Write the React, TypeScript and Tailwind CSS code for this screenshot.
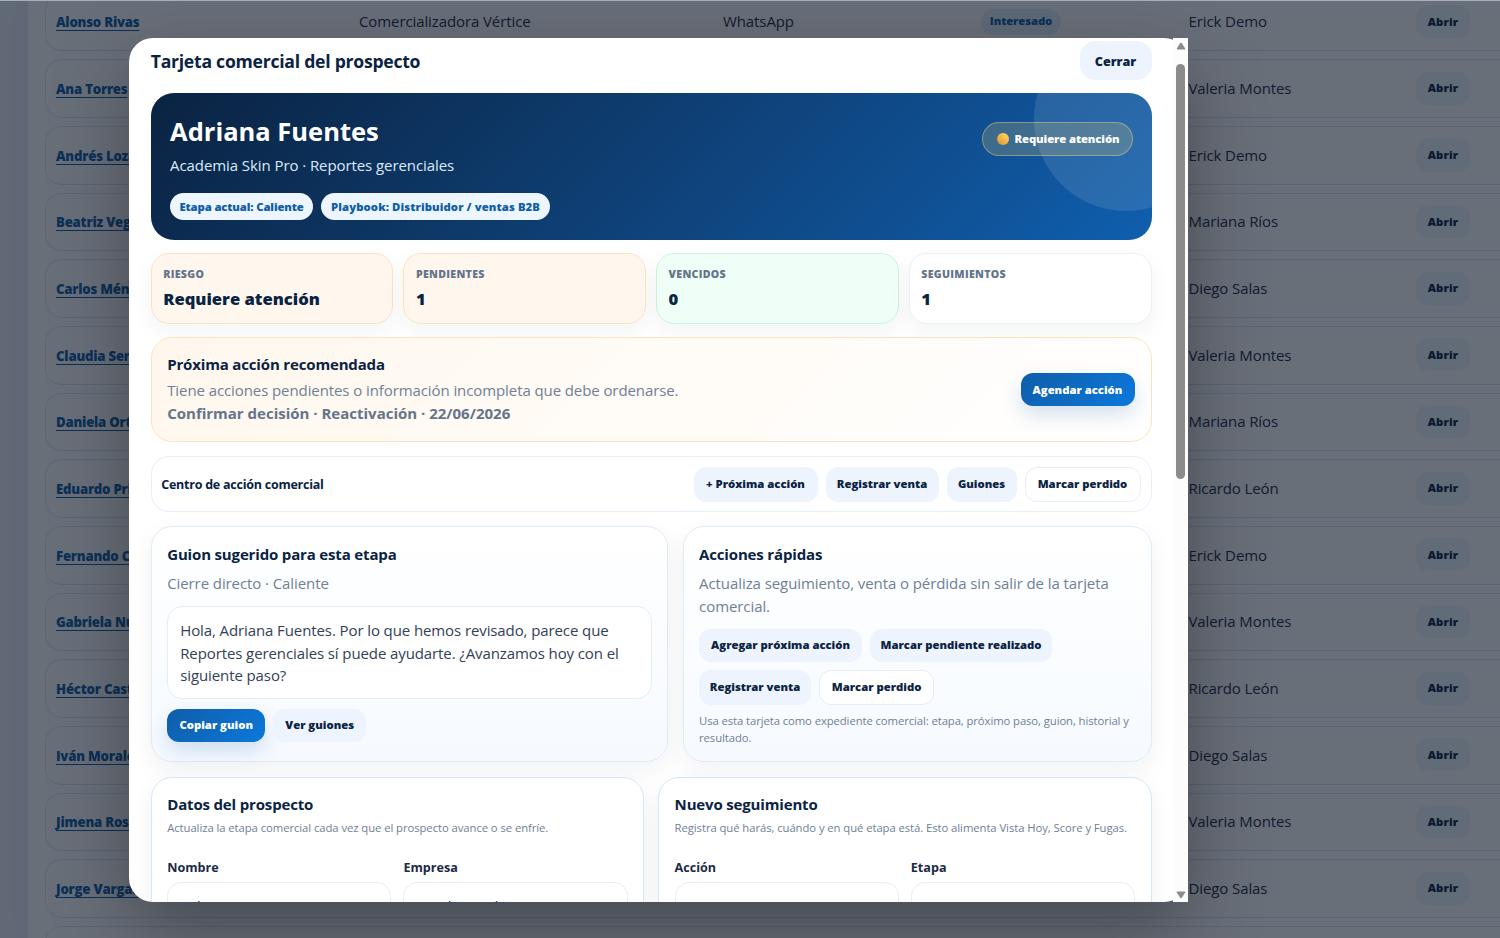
import type { ReactNode } from 'react'
import clsx from 'clsx'

type Row = {
  name: string
  owner: string
  company?: string
  channel?: string
  stage?: string
}

const rows: Row[] = [
  { name: 'Alonso Rivas', owner: 'Erick Demo', company: 'Comercializadora Vértice', channel: 'WhatsApp', stage: 'Interesado' },
  { name: 'Ana Torres', owner: 'Valeria Montes' },
  { name: 'Andrés Lozano', owner: 'Erick Demo' },
  { name: 'Beatriz Vega', owner: 'Mariana Ríos' },
  { name: 'Carlos Méndez', owner: 'Diego Salas' },
  { name: 'Claudia Serrano', owner: 'Valeria Montes' },
  { name: 'Daniela Ortiz', owner: 'Mariana Ríos' },
  { name: 'Eduardo Prieto', owner: 'Ricardo León' },
  { name: 'Fernando Cruz', owner: 'Erick Demo' },
  { name: 'Gabriela Núñez', owner: 'Valeria Montes' },
  { name: 'Héctor Castro', owner: 'Ricardo León' },
  { name: 'Iván Morales', owner: 'Diego Salas' },
  { name: 'Jimena Rosas', owner: 'Valeria Montes' },
  { name: 'Jorge Vargas', owner: 'Diego Salas' },
  { name: '', owner: '' },
]

function ProspectRow({ row }: { row: Row }) {
  return (
    <div className="flex h-[58.67px] w-[1480px] shrink-0 items-center rounded-[16px] border border-[#dbe7f5] bg-white pb-[0.7px] pl-[10px] text-[15px] tracking-[-0.1px] text-[#1c2b45]">
      <div className="w-[303px]">
        <span className="text-[13.2px] font-extrabold tracking-[-0.22px] text-[#0f5ea8] underline decoration-1 underline-offset-[3px]">{row.name}</span>
      </div>
      <div className="w-[364px]">{row.company}</div>
      <div className="w-[258px]">{row.channel}</div>
      <div className="w-[207.500px]">
        {row.stage && (
          <span className="inline-flex h-[26px] w-[80px] items-center justify-center rounded-full bg-[#e3effc] text-[11.3px] font-extrabold text-[#0f5ea8]">
            {row.stage}
          </span>
        )}
      </div>
      <div className="w-[227.500px]">{row.owner}</div>
      {row.owner && (
        <button className="h-[33px] w-[54px] rounded-[12px] bg-[#edf4fd] pt-px text-[11.3px] font-extrabold tracking-[0.2px] text-[#0a2342]">Abrir</button>
      )}
    </div>
  )
}

type BtnProps = { children: ReactNode; kind?: 'soft' | 'primary' | 'line'; className?: string }

function Btn({ children, kind = 'soft', className }: BtnProps) {
  return (
    <button
      className={clsx(
        'shrink-0 rounded-[12px] font-extrabold whitespace-nowrap',
        kind === 'soft' && 'bg-[#edf4fd] text-[#0a2342]',
        kind === 'line' && 'border border-[#e6edf7] bg-white text-[#0a2342]',
        kind === 'primary' && 'bg-linear-135 from-[#0f5ea8] to-[#0b78dc] text-white shadow-[0_9px_20px_rgba(15,94,168,0.18)]',
        className,
      )}
    >
      {children}
    </button>
  )
}

const tones = {
  warn: 'border-[#fde3bd] bg-[#fff7ed]',
  ok: 'border-[#c9f3dc] bg-[#effef7]',
  plain: 'border-[#e9f0f8] bg-white',
}

function Stat({ label, value, tone }: { label: string; value: string; tone: keyof typeof tones }) {
  return (
    <div className={clsx('flex-1 rounded-[18px] border pt-[12px] pl-[11.5px] shadow-[0_8px_22px_rgba(10,35,66,0.05)]', tones[tone])}>
      <div className="text-[10.6px] leading-[16px] font-extrabold tracking-[0.32px] text-[#64748b] uppercase">{label}</div>
      <div className="mt-[5px] text-[16.6px] leading-[24px] font-extrabold text-[#0a2342]">{value}</div>
    </div>
  )
}

function Field({ label, value }: { label: string; value?: string }) {
  return (
    <label className="block flex-1">
      <span className="block text-[12.6px] leading-[18px] font-bold text-[#1c2b45]">{label}</span>
      <span className="mt-[5px] block h-[48px] rounded-[14px] border border-[#e6edf7] bg-white pt-[12.6px] pl-[15px] text-[14px] leading-[22px] text-[#0a2342]">{value}</span>
    </label>
  )
}

function CardTitle({ children }: { children: ReactNode }) {
  return <h3 className="text-[15px] leading-[24px] font-bold tracking-[-0.16px] text-[#0a2342]">{children}</h3>
}

function FormCard({ title, note, children }: { title: string; note: string; children: ReactNode }) {
  return (
    <section className="h-[240px] flex-1 rounded-[21px] border border-[#d5e7fa] bg-white px-[15.5px] pt-[14.5px] shadow-[0_8px_24px_rgba(10,35,66,0.06)]">
      <CardTitle>{title}</CardTitle>
      <p className="mt-[3px] text-[11.3px] leading-[17px] tracking-[-0.07px] whitespace-nowrap text-[#708096]">{note}</p>
      <div className="mt-[23px] flex gap-[12px]">{children}</div>
    </section>
  )
}

function ProspectModal() {
  return (
    <div className="relative flex h-[864px] w-[1059px] rounded-[24px] bg-white shadow-[0_28px_75px_rgba(0,0,0,0.34)]">
      <div className="h-full w-[1044px] overflow-hidden rounded-l-[24px] pt-[3px] pr-[21.5px] pl-[21.7px]">
        <header className="flex h-[39px] items-center justify-between">
          <h2 className="pt-[2px] text-[17.6px] font-bold tracking-[-0.25px] text-[#0a2342]">Tarjeta comercial del prospecto</h2>
          <Btn className="h-[39px] w-[72px] rounded-[15px] pt-[3px] text-[12.6px]">Cerrar</Btn>
        </header>

        <section className="relative mt-[13px] flex h-[147px] justify-between overflow-hidden rounded-[23px] bg-linear-135 from-[#0a2342] to-[#0f5fae] pt-[21px] pr-[19px] pl-[19.4px]">
          <div className="absolute top-[-66px] right-[-66px] size-[184px] rounded-full bg-white/11" />
          <div>
            <h1 className="text-[25.5px] leading-[35px] font-bold text-white">Adriana Fuentes</h1>
            <p className="mt-[4px] text-[15px] leading-[24px] tracking-[-0.08px] text-[#dceafa]">Academia Skin Pro · Reportes gerenciales</p>
            <div className="mt-[16px] flex gap-[8px]">
              <span className="flex h-[27px] w-[143px] items-center justify-center rounded-full bg-[#edf5ff] pt-px text-[11.3px] font-extrabold tracking-[-0.12px] text-[#0f5ea8]">Etapa actual: Caliente</span>
              <span className="flex h-[27px] w-[229px] items-center justify-center rounded-full bg-[#edf5ff] pt-px text-[11.3px] font-extrabold tracking-[0.1px] text-[#0f5ea8]">Playbook: Distribuidor / ventas B2B</span>
            </div>
          </div>
          <div className="relative mt-[8px] flex h-[34px] w-[151px] items-center rounded-full border border-[#fcd97a]/40 bg-[#fbd56d]/20 pl-[14px] text-white">
            <span className="size-[12px] rounded-full bg-linear-to-tr from-[#dd8f35] to-[#ffe05c]" />
            <span className="ml-[6px] pt-[1.5px] text-[11.3px] font-extrabold tracking-[-0.1px] whitespace-nowrap">Requiere atención</span>
          </div>
        </section>

        <div className="mt-[13px] flex h-[71px] gap-[10px]">
          <Stat label="Riesgo" value="Requiere atención" tone="warn" />
          <Stat label="Pendientes" value="1" tone="warn" />
          <Stat label="Vencidos" value="0" tone="ok" />
          <Stat label="Seguimientos" value="1" tone="plain" />
        </div>

        <section className="relative mt-[13px] flex h-[105px] items-center justify-between rounded-[21px] border border-[#fde3bd] bg-linear-135 from-[#fff7ed] to-white pr-[16px] pl-[15.5px]">
          <div className="pb-[2px]">
            <CardTitle>Próxima acción recomendada</CardTitle>
            <p className="mt-[3px] text-[15px] leading-[22.6px] tracking-[-0.09px] text-[#708096]">Tiene acciones pendientes o información incompleta que debe ordenarse.</p>
            <p className="text-[15px] leading-[22.6px] font-bold text-[#64748b]">Confirmar decisión · Reactivación · 22/06/2026</p>
          </div>
          <Btn kind="primary" className="h-[33px] w-[114px] pt-px text-[11.3px]">Agendar acción</Btn>
        </section>

        <section className="mt-[14px] flex h-[56px] items-center justify-between rounded-[18px] border border-[#e6eefa] bg-white pr-[10px] pl-[9.5px]">
          <h3 className="pt-[2px] text-[12.5px] font-bold tracking-[-0.24px] text-[#0a2342]">Centro de acción comercial</h3>
          <div className="flex gap-[8px] text-[11.3px]">
            <Btn className="h-[35px] w-[124px] pt-px">+ Próxima acción</Btn>
            <Btn className="h-[35px] w-[113px] pt-px">Registrar venta</Btn>
            <Btn className="h-[35px] w-[70px] pt-px">Guiones</Btn>
            <Btn kind="line" className="h-[35px] w-[116px] pt-px">Marcar perdido</Btn>
          </div>
        </section>

        <div className="mt-[14px] flex h-[236px] gap-[14.5px]">
          <section className="w-[517.500px] rounded-[21px] border border-[#e0ebf8] bg-linear-to-b from-white to-[#f6faff] px-[15.5px] pt-[15px] shadow-[0_8px_24px_rgba(10,35,66,0.06)]">
            <CardTitle>Guion sugerido para esta etapa</CardTitle>
            <p className="mt-[6px] text-[15px] leading-[22.6px] tracking-[-0.09px] text-[#708096]">Cierre directo · Caliente</p>
            <p className="mt-[11px] h-[93px] rounded-[15px] border border-[#e6edf7] bg-white pt-[12.4px] pl-[12px] text-[15px] leading-[22.6px] tracking-[-0.1px] text-[#334155]">
              Hola, Adriana Fuentes. Por lo que hemos revisado, parece que
              <br />
              Reportes gerenciales sí puede ayudarte. ¿Avanzamos hoy con el
              <br />
              siguiente paso?
            </p>
            <div className="mt-[10px] flex gap-[8px] text-[11.3px]">
              <Btn kind="primary" className="h-[33px] w-[98px] pt-px">Copiar guion</Btn>
              <Btn className="h-[33px] w-[93px] pt-px">Ver guiones</Btn>
            </div>
          </section>
          <section className="flex-1 rounded-[21px] border border-[#e0ebf8] bg-linear-to-b from-white to-[#f6faff] px-[15.4px] pt-[15px] shadow-[0_8px_24px_rgba(10,35,66,0.06)]">
            <CardTitle>Acciones rápidas</CardTitle>
            <p className="mt-[6px] text-[15px] leading-[22.6px] tracking-[-0.08px] text-[#708096]">
              Actualiza seguimiento, venta o pérdida sin salir de la tarjeta
              <br />
              comercial.
            </p>
            <div className="mt-[12px] flex flex-wrap gap-[8px] text-[11.3px]">
              <Btn className="h-[33px] w-[163px]">Agregar próxima acción</Btn>
              <Btn className="h-[33px] w-[182px]">Marcar pendiente realizado</Btn>
              <Btn className="h-[35px] w-[112px]">Registrar venta</Btn>
              <Btn kind="line" className="h-[35px] w-[115px]">Marcar perdido</Btn>
            </div>
            <p className="mt-[7px] text-[11.3px] leading-[17px] tracking-[-0.09px] whitespace-nowrap text-[#708096]">
              Usa esta tarjeta como expediente comercial: etapa, próximo paso, guion, historial y
              <br />
              resultado.
            </p>
          </section>
        </div>

        <div className="mt-[14.5px] flex gap-[14px]">
          <FormCard title="Datos del prospecto" note="Actualiza la etapa comercial cada vez que el prospecto avance o se enfríe.">
            <Field label="Nombre" value="Adriana Fuentes" />
            <Field label="Empresa" value="Academia Skin Pro" />
          </FormCard>
          <FormCard title="Nuevo seguimiento" note="Registra qué harás, cuándo y en qué etapa está. Esto alimenta Vista Hoy, Score y Fugas.">
            <Field label="Acción" />
            <Field label="Etapa" />
          </FormCard>
        </div>
      </div>

      <div className="flex h-full w-[15px] flex-col items-center bg-[#fcfcfc] pt-[4px]">
        <svg width="10" height="8" viewBox="0 0 10 8" fill="#8b8b8b"><path d="M4.2 1.2 Q5 .2 5.8 1.2 L9.2 6.6 Q9.4 7.5 8.6 7.5 H1.4 Q.6 7.5 .8 6.6Z" /></svg>
        <div className="mt-[14px] h-[415px] w-[9px] rounded-full bg-[#8b8b8b]" />
        <svg className="mt-auto mb-[3px]" width="10" height="8" viewBox="0 0 10 8" fill="#8b8b8b"><path d="M4.2 6.8 Q5 7.8 5.8 6.8 L9.2 1.4 Q9.4 .5 8.6 .5 H1.4 Q.6 .5 .8 1.4Z" /></svg>
      </div>
    </div>
  )
}

export default function App() {
  return (
    <div className="relative h-[938px] w-[1500px] overflow-hidden bg-[#eaf0f9] font-['Open_Sans','Noto_Sans',sans-serif]">
      <div className="ml-[28px] h-full bg-white pl-[17px] shadow-[0_0_30px_rgba(10,35,66,0.05)]">
        <div className="flex h-full flex-col gap-[8px] overflow-hidden">
          <div className="-mt-[15.3px] h-0 shrink-0" />
          {rows.map((row, i) => (
            <ProspectRow key={i} row={row} />
          ))}
        </div>
      </div>
      <div className="absolute inset-0 overflow-hidden border-t border-[#a6afbd] bg-[#0a1424]/61 pt-[37px] pl-[129px]">
        <ProspectModal />
      </div>
    </div>
  )
}
